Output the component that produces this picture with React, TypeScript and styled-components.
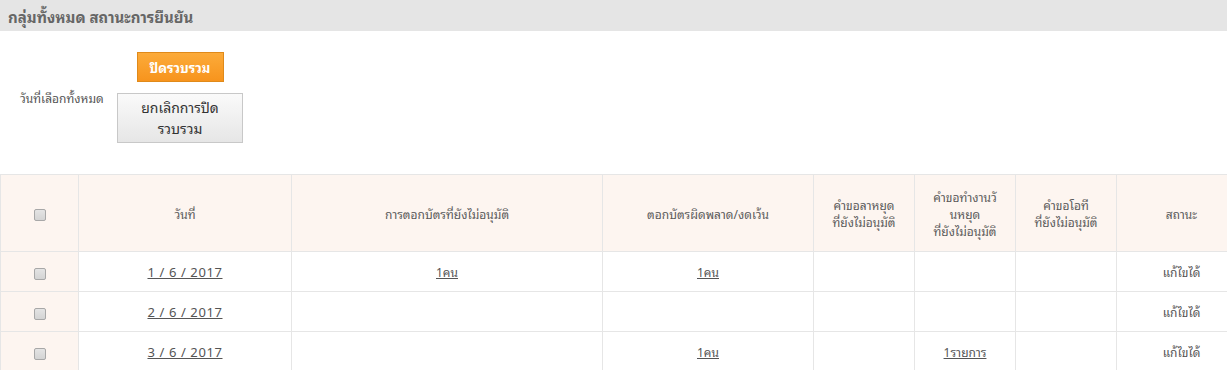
import React from "react";
import styled, { createGlobalStyle } from "styled-components";

const Global = createGlobalStyle`
  html, body { margin: 0; padding: 0; background: #fff; overflow: hidden; }
  body { font-family: Tahoma, "Noto Sans Thai Looped", "Loma", "Waree", "Garuda", "Noto Sans Thai", "DejaVu Sans", sans-serif; font-size: 12px; color: #555; }
`;

const Page = styled.div`
  width: 1227px;
`;

const TitleBar = styled.div`
  height: 31px;
  background: #e5e5e5;
  display: flex;
  align-items: center;
  padding-left: 8px;
  font-size: 15px;
  font-weight: bold;
  color: #666;
`;

const Controls = styled.div`
  display: grid;
  grid-template-columns: 97px 126px;
  grid-template-rows: auto auto;
  align-content: start;
  row-gap: 11px;
  padding: 21px 0 0 20px;
  height: 122px;
  box-sizing: border-box;
  margin-bottom: 21px;
`;

const Label = styled.div`
  grid-column: 1;
  grid-row: 2;
  font-size: 12px;
  color: #555;
  line-height: 14px;
  margin-top: -2px;
`;

const OrangeButton = styled.button`
  grid-column: 2;
  grid-row: 1;
  justify-self: center;
  width: 87px;
  height: 30px;
  border: 1px solid #e08a1a;
  background: linear-gradient(#fcab3a, #f7941d);
  color: #fff;
  font-family: inherit;
  font-size: 13px;
  font-weight: bold;
  padding: 0;
  cursor: pointer;
`;

const GrayButton = styled.button`
  grid-column: 2;
  grid-row: 2;
  width: 126px;
  height: 50px;
  border: 1px solid #c8c8c8;
  background: linear-gradient(#fafafa, #e6e6e6);
  color: #333;
  font-family: inherit;
  font-size: 14px;
  line-height: 21px;
  padding: 0 10px 2px;
  cursor: pointer;
`;

const Table = styled.table`
  border-collapse: collapse;
  table-layout: fixed;
  width: 1246px;
  border-top: 1px solid #e6e6e6;
`;

const Th = styled.th<{ $w: number }>`
  width: ${(p) => p.$w - 1}px;
  height: 76px;
  background: #fdf5f0;
  border: 1px solid #e6e6e6;
  border-top: none;
  font-weight: normal;
  color: #5a5a5a;
  font-size: 12px;
  line-height: 17px;
  text-align: center;
  vertical-align: middle;
  padding: 0;
`;

const Td = styled.td<{ $shade?: boolean }>`
  height: 39px;
  border: 1px solid #e6e6e6;
  background: ${(p) => (p.$shade ? "#fdf5f0" : "#fff")};
  text-align: center;
  vertical-align: middle;
  color: #555;
  font-size: 12px;
  padding: 0;
`;

const LinkText = styled.a`
  color: #555;
  text-decoration: underline;
  cursor: pointer;
`;

const DateLink = styled(LinkText)`
  font-size: 13px;
  letter-spacing: 0.6px;
`;

const Check = styled.input.attrs({ type: "checkbox" })`
  appearance: none;
  -webkit-appearance: none;
  width: 12px;
  height: 12px;
  margin: 0;
  border: 1px solid #a8a8a8;
  border-radius: 2px;
  background: linear-gradient(#e4e4e4, #d4d4d4);
  vertical-align: middle;
  box-sizing: border-box;
`;

const cols = [78, 213, 311, 211, 101, 101, 101, 130];

type Row = { date: string; a?: string; b?: string; c?: string; d?: string; e?: string };

const rows: Row[] = [
  { date: "1 / 6 / 2017", a: "1คน", b: "1คน" },
  { date: "2 / 6 / 2017" },
  { date: "3 / 6 / 2017", b: "1คน", d: "1รายการ" },
];

const cell = (v?: string) => (v ? <LinkText>{v}</LinkText> : null);

export default function App() {
  return (
    <Page>
      <Global />
      <TitleBar>กลุ่มทั้งหมด สถานะการยืนยัน</TitleBar>
      <Controls>
        <OrangeButton>ปิดรวบรวม</OrangeButton>
        <Label>วันที่เลือกทั้งหมด</Label>
        <GrayButton>ยกเลิกการปิด<br />รวบรวม</GrayButton>
      </Controls>
      <Table>
        <thead>
          <tr>
            <Th $w={cols[0]}><Check /></Th>
            <Th $w={cols[1]}>วันที่</Th>
            <Th $w={cols[2]}>การตอกบัตรที่ยังไม่อนุมัติ</Th>
            <Th $w={cols[3]}>ตอกบัตรผิดพลาด/งดเว้น</Th>
            <Th $w={cols[4]}>คำขอลาหยุด<br />ที่ยังไม่อนุมัติ</Th>
            <Th $w={cols[5]}>คำขอทำงานวั<br />นหยุด<br />ที่ยังไม่อนุมัติ</Th>
            <Th $w={cols[6]}>คำขอโอที<br />ที่ยังไม่อนุมัติ</Th>
            <Th $w={cols[7]}>สถานะ</Th>
          </tr>
        </thead>
        <tbody>
          {rows.map((r) => (
            <tr key={r.date}>
              <Td $shade><Check /></Td>
              <Td><DateLink>{r.date}</DateLink></Td>
              <Td>{cell(r.a)}</Td>
              <Td>{cell(r.b)}</Td>
              <Td>{cell(r.c)}</Td>
              <Td>{cell(r.d)}</Td>
              <Td>{cell(r.e)}</Td>
              <Td>แก้ไขได้</Td>
            </tr>
          ))}
        </tbody>
      </Table>
    </Page>
  );
}
